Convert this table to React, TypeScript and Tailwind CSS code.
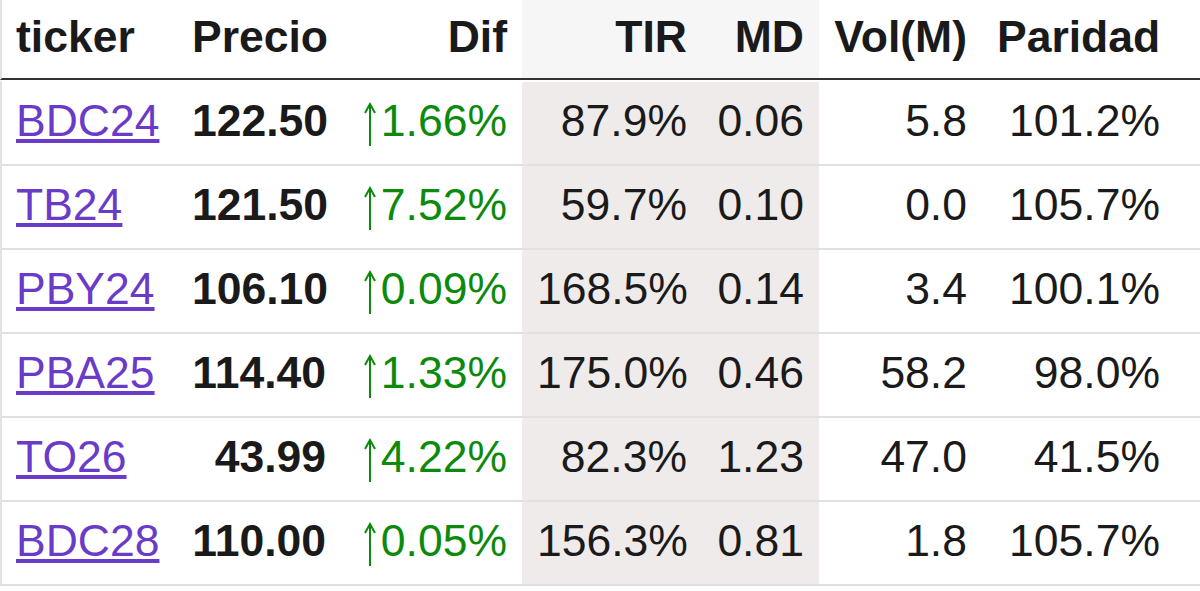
const bonds = [
  { ticker: 'BDC24', precio: '122.50', dif: '1.66%', tir: '87.9%', md: '0.06', vol: '5.8', paridad: '101.2%', tna: '10.5%' },
  { ticker: 'TB24', precio: '121.50', dif: '7.52%', tir: '59.7%', md: '0.10', vol: '0.0', paridad: '105.7%', tna: '9.8%' },
  { ticker: 'PBY24', precio: '106.10', dif: '0.09%', tir: '168.5%', md: '0.14', vol: '3.4', paridad: '100.1%', tna: '12.1%' },
  { ticker: 'PBA25', precio: '114.40', dif: '1.33%', tir: '175.0%', md: '0.46', vol: '58.2', paridad: '98.0%', tna: '9.5%' },
  { ticker: 'TO26', precio: '43.99', dif: '4.22%', tir: '82.3%', md: '1.23', vol: '47.0', paridad: '41.5%', tna: '11.0%' },
  { ticker: 'BDC28', precio: '110.00', dif: '0.05%', tir: '156.3%', md: '0.81', vol: '1.8', paridad: '105.7%', tna: '13.2%' },
];

// thin up arrow, same shape as Arial's U+2191
function UpArrow() {
  return (
    <svg viewBox="0 0 22 44" className="inline-block w-[22px] h-[44px] align-[-10px]" fill="none">
      <path d="M11 3V44" stroke="currentColor" strokeWidth="2" />
      <path d="M6 11L11 2L16 11" stroke="currentColor" strokeWidth="2" strokeLinejoin="miter" />
    </svg>
  );
}

export default function App() {
  return (
    <div className="w-[1200px] h-[591px] overflow-hidden bg-white">
      <table className="table-fixed w-[1339px] border-separate border-spacing-0 text-[44.5px] leading-[50px] text-[#1a1a1a] font-[family-name:Liberation_Sans,Arial,sans-serif]">
        <colgroup>
          <col className="w-[177px]" />
          <col className="w-[164px]" />
          <col className="w-[181px]" />
          <col className="w-[180px]" />
          <col className="w-[117px]" />
          <col className="w-[163px]" />
          <col className="w-[193px]" />
          <col className="w-[164px]" />
        </colgroup>
        <thead>
          <tr className="font-bold">
            <th className="border-l-2 border-l-[#e2e2e2] border-b-2 border-b-[#333] pl-[14px] pr-[15px] pt-[12px] pb-[16px] text-left">ticker</th>
            <th className="border-b-2 border-b-[#333] px-[15px] pt-[12px] pb-[16px] text-right">Precio</th>
            <th className="border-b-2 border-b-[#333] px-[15px] pt-[12px] pb-[16px] text-right">Dif</th>
            <th className="border-b-2 border-b-[#333] bg-[#f6f6f6] px-[15px] pt-[12px] pb-[16px] text-right">TIR</th>
            <th className="border-b-2 border-b-[#333] bg-[#f6f6f6] px-[15px] pt-[12px] pb-[16px] text-right">MD</th>
            <th className="border-b-2 border-b-[#333] px-[15px] pt-[12px] pb-[16px] text-right">Vol(M)</th>
            <th className="border-b-2 border-b-[#333] px-[15px] pt-[12px] pb-[16px] text-right">Paridad</th>
            <th className="border-b-2 border-b-[#333] px-[15px] pt-[12px] pb-[16px] text-right">TNA</th>
          </tr>
        </thead>
        <tbody>
          {bonds.map((b, i) => {
            let line = i === 0 ? 'border-t-2 border-t-white' : 'border-t-2 border-t-[#e0e0e0]';
            if (i === bonds.length - 1) line += ' border-b-2 border-b-[#e0e0e0]';
            return (
              <tr key={b.ticker}>
                <td className={`${line} border-l-2 border-l-[#e2e2e2] pl-[14px] pr-[15px] pt-[14px] pb-[18px] text-left`}>
                  <a href="#" className="text-[#6a3bc8] underline">{b.ticker}</a>
                </td>
                <td className={`${line} px-[15px] pt-[14px] pb-[18px] text-right font-bold`}>{b.precio}</td>
                <td className={`${line} px-[15px] pt-[14px] pb-[18px] text-right text-[#0b8a0b]`}>
                  <UpArrow />
                  {b.dif}
                </td>
                <td className={`${line} bg-[#efebeb] px-[15px] pt-[14px] pb-[18px] text-right`}>{b.tir}</td>
                <td className={`${line} bg-[#efebeb] px-[15px] pt-[14px] pb-[18px] text-right`}>{b.md}</td>
                <td className={`${line} px-[15px] pt-[14px] pb-[18px] text-right`}>{b.vol}</td>
                <td className={`${line} px-[15px] pt-[14px] pb-[18px] text-right`}>{b.paridad}</td>
                <td className={`${line} px-[15px] pt-[14px] pb-[18px] text-right`}>{b.tna}</td>
              </tr>
            );
          })}
        </tbody>
      </table>
    </div>
  );
}
